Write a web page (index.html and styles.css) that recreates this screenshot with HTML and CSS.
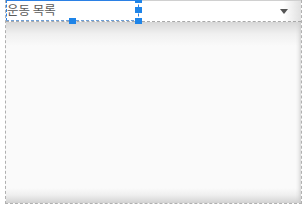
FILE: index.html
```html
<!DOCTYPE html>
<html>
<head>
  <title>운동 목록</title>
  <link rel="stylesheet" href="styles.css">
</head>
<body>
<div class="frame">
  <div class="header">
    <div class="title">
      <span class="title-text">운동 목록</span>
      <span class="handle handle-tr"></span>
      <span class="handle handle-r"></span>
      <span class="handle handle-b"></span>
      <span class="handle handle-br"></span>
    </div>
    <span class="arrow"></span>
  </div>
  <div class="list"></div>
</div>
</body>
</html>
```

FILE: styles.css
```css
body {
  margin: 0;
  background-color: #fff;
  font-family: "Noto Sans CJK KR", "Noto Sans", sans-serif;
}

.frame {
  margin-left: 5px;
  width: 295px;
  height: 203px;
  border-left: 1px dashed #b0b0b0;
  border-right: 1px dashed #b0b0b0;
  border-bottom: 1px dashed #b0b0b0;
  display: flex;
  flex-direction: column;
  background-color: #fafafa;
}

.header {
  height: 20px;
  display: flex;
  align-items: center;
  justify-content: space-between;
  border-top: 1px solid #d0d0d0;
  border-bottom: 1px dashed #a8a8a8;
  background: linear-gradient(to right, #fff 0%, #fff 94%, #e0e0e0 100%);
}

.title {
  position: relative;
  width: 131px;
  height: 19px;
  border: 1px dashed #2b80e4;
  border-top-style: solid;
  border-bottom-color: #6f9fd6;
  display: flex;
  align-items: center;
  margin-top: -1px;
}

.title-text {
  font-size: 12.5px;
  color: #5a5a5a;
  line-height: 1;
}

.handle {
  position: absolute;
  width: 7px;
  height: 6px;
  background-color: #1e84e8;
}

.handle-tr {
  right: -4px;
  top: -4px;
}

.handle-r {
  right: -4px;
  top: 6px;
}

.handle-b {
  left: 62px;
  bottom: -4px;
}

.handle-br {
  right: -4px;
  bottom: -4px;
}

.arrow {
  width: 0;
  height: 0;
  margin-right: 13px;
  border-left: 4px solid transparent;
  border-right: 4px solid transparent;
  border-top: 5px solid #555;
}

.list {
  flex: 1;
  background: linear-gradient(to bottom, #d8d8d8 0px, #f0f0f0 12px, #fafafa 24px, #fafafa 166px, #efefef 173px, #d2d2d2 181px);
  box-shadow: inset -4px 0 4px -3px #c8c8c8;
}
```
